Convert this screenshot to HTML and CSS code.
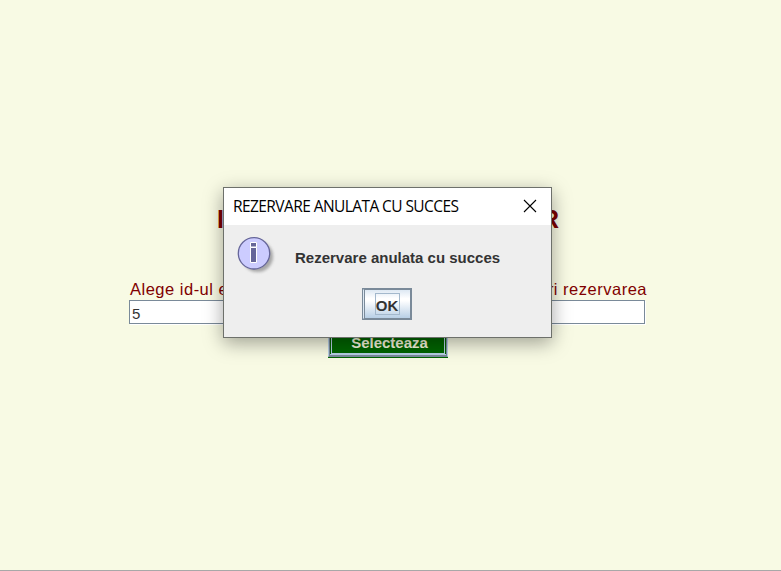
FILE: index.html
```html
<!DOCTYPE html>
<html lang="ro">
<head>
<meta charset="utf-8">
<title>Rezervare</title>
<link rel="stylesheet" href="styles.css">
</head>
<body>
<main class="page">
  <h1 class="heading"><span>I</span><span>R</span></h1>
  <div class="form">
    <div class="label"><span>Alege id-ul e</span><span>ri rezervarea</span></div>
    <div class="field">5</div>
    <div class="select"><div class="select-face">Selecteaza</div></div>
  </div>
</main>
<section class="dialog" role="dialog">
  <header class="titlebar">
    <span class="title">REZERVARE ANULATA CU SUCCES</span>
    <svg class="close" width="14" height="14" viewBox="0 0 14 14"><path d="M1 1L13 13M13 1L1 13" stroke="#000" stroke-width="1.1" fill="none"/></svg>
  </header>
  <div class="content">
    <div class="message">
      <svg class="info" width="42" height="42" viewBox="0 0 42 42">
        <defs><filter id="soft" x="-20%" y="-20%" width="140%" height="140%"><feGaussianBlur stdDeviation="1.5"/></filter></defs>
        <circle cx="20.5" cy="20.5" r="15.5" fill="#777" opacity=".6" filter="url(#soft)"/>
        <circle cx="17" cy="17.3" r="15.7" fill="#ccccff" stroke="#666699" stroke-width="1.3"/>
        <path d="M13.5 6.5h6v4.500h-6zM13.5 11.500h6v15h-6z" fill="#666699" stroke="#fff" stroke-width="1"/>
      </svg>
      <span class="text">Rezervare anulata cu succes</span>
    </div>
    <div class="ok"><div class="ok-face"><span class="ok-focus">OK</span></div></div>
  </div>
</section>
</body>
</html>
```
FILE: styles.css
```css
* { box-sizing: border-box; }
body {
  margin: 0;
  height: 571px;
  overflow: hidden;
  background: #f8fae4;
  font-family: "Liberation Sans", Arial, sans-serif;
}
.page {
  height: 571px;
  padding-top: 204px;
  border-bottom: 1px solid #a8a8a8;
}
.heading {
  display: flex;
  justify-content: space-between;
  width: 342px;
  height: 30px;
  margin: 0 0 0 217px;
  color: #7d0000;
  font-size: 25px;
  line-height: 30px;
}
.form {
  width: 517px;
  margin: 45px 0 0 129px;
}
.label {
  display: flex;
  justify-content: space-between;
  width: 518px;
  height: 21px;
  padding-left: 1px;
  color: #800000;
  font-size: 16.5px;
  line-height: 21px;
  letter-spacing: 0.5px;
  white-space: nowrap;
}
.field {
  width: 516px;
  height: 24px;
  padding-left: 2px;
  border: 1px solid #7a8a99;
  box-shadow: 1px 1px 0 #fff;
  background: #fff;
  color: #333;
  font-size: 15px;
  line-height: 25px;
}
.select {
  width: 120px;
  height: 33px;
  margin: 1px 0 0 199px;
  border-bottom: 1px solid #006400;
}
.select-face {
  height: 32px;
  border: 1px solid #7a8a99;
  border-left-color: #b8cfe5;
  border-right-color: #b8cfe5;
  box-shadow: inset 0 0 0 1px #7a8a99, inset 0 -2px 0 #b8cfe5;
  outline: 1px solid #b8cfe5;
  outline-offset: -4px;
  background: #006400;
  color: #f5f5dc;
  font-size: 15px;
  font-weight: bold;
  line-height: 33px;
  text-align: center;
  text-indent: 3px;
}
.dialog {
  position: absolute;
  left: 223px;
  top: 187px;
  width: 329px;
  height: 151px;
  border: 1px solid #6d706b;
  background: #eee;
  box-shadow: 0 5px 18px rgba(0, 0, 0, 0.36);
}
.titlebar {
  display: flex;
  align-items: center;
  justify-content: space-between;
  height: 37px;
  padding: 0 14px 1px 9px;
  background: #fff;
}
.title {
  color: #000;
  font-family: "Open Sans", "Noto Sans", sans-serif;
  font-size: 15.5px;
  letter-spacing: -0.58px;
  white-space: nowrap;
}
.message {
  display: flex;
  height: 63px;
  padding: 11px 0 0 13px;
}
.text {
  margin: 12px 0 0 16px;
  color: #333;
  font-size: 15px;
  font-weight: bold;
  line-height: 20px;
  white-space: nowrap;
}
.ok {
  width: 50px;
  height: 32px;
  margin-left: 138px;
  padding: 1px;
  background: #7a8a99;
}
.ok-face {
  display: flex;
  justify-content: center;
  align-items: center;
  height: 30px;
  border: 1px solid #7a8a99;
  border-left: 1px solid #dde8f3;
  box-shadow: inset 1px 0 0 #7a8a99;
  background: linear-gradient(#dde8f3, #fff 30%, #fff 38%, #b8cfe5);
}
.ok-focus {
  width: 25px;
  height: 22px;
  border: 1px solid #a3b8cc;
  color: #333;
  font-size: 15px;
  font-weight: bold;
  line-height: 23px;
  text-align: center;
}
```
